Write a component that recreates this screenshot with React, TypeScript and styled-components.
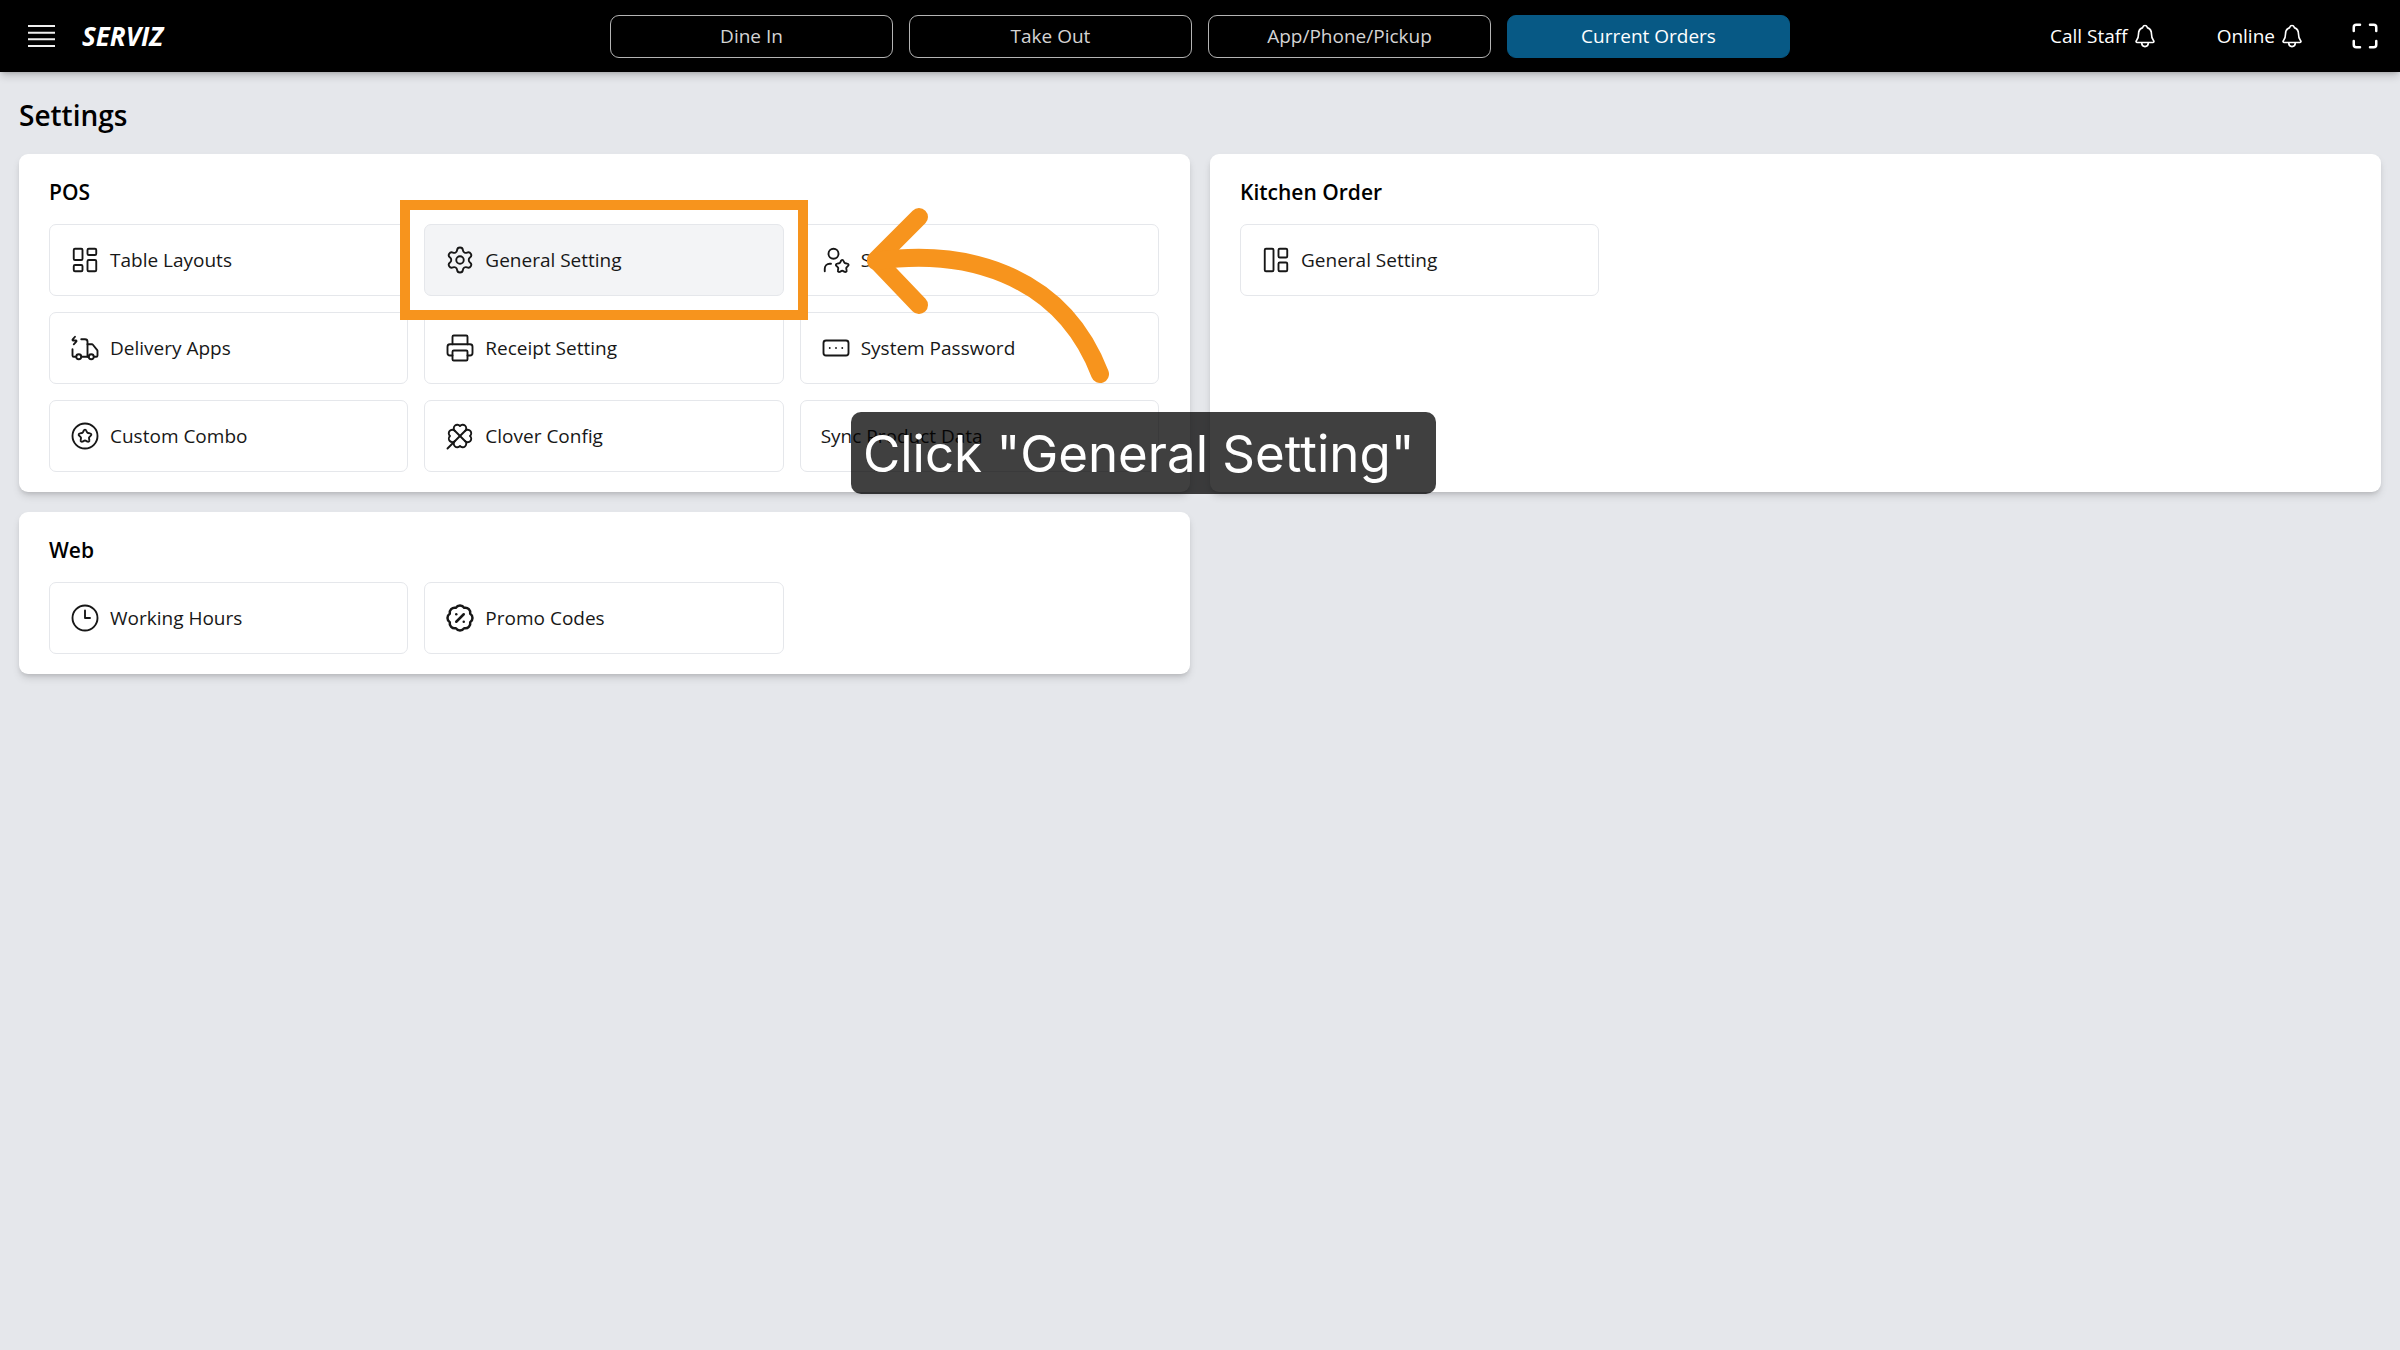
import React from "react";
import styled, { createGlobalStyle } from "styled-components";
import {
  BadgePercent,
  CircleStar,
  Clock3,
  Clover,
  LayoutDashboard,
  LayoutPanelLeft,
  Maximize,
  Printer,
  RectangleEllipsis,
  Settings,
  TruckElectric,
  UserStar,
} from "lucide-react";
import type { LucideIcon } from "lucide-react";
import { IoNotificationsOutline } from "react-icons/io5";

const GlobalStyle = createGlobalStyle`
  *, *::before, *::after { box-sizing: border-box; }
  body {
    margin: 0;
    min-height: 100vh;
    background: #e5e7eb;
    color: #000;
    font-family: "Open Sans", "Noto Sans", sans-serif;
  }
  button { font: inherit; color: inherit; cursor: pointer; }
  h1, h2 { margin: 0; }
`;

const Header = styled.header`
  display: grid;
  grid-template-columns: 1fr minmax(0, 1180px) 1fr;
  align-items: center;
  height: 72px;
  background: #000;
  color: #fff;
  box-shadow: 0 5px 8px -1px rgba(0, 0, 0, 0.18), 0 2px 4px -2px rgba(0, 0, 0, 0.2);
`;

const HeaderStart = styled.div`
  display: flex;
  align-items: center;
  gap: 27px;
  padding-left: 28px;
`;

const HeaderEnd = styled.div`
  display: flex;
  align-items: center;
  justify-content: flex-end;
  padding-right: 20px;
`;

const IconButton = styled.button`
  display: flex;
  padding: 0;
  border: 0;
  background: none;
`;

const Brand = styled.a`
  color: #fff;
  font-size: 26px;
  line-height: 36px;
  font-weight: 700;
  font-style: italic;
  text-decoration: none;
`;

const Nav = styled.nav`
  display: grid;
  grid-template-columns: repeat(4, 1fr);
  gap: 16px;
`;

const NavButton = styled.button<{ $active?: boolean }>`
  height: 43px;
  padding: 0;
  border: 1px solid ${(p) => (p.$active ? "#075985" : "#b4b4b4")};
  border-radius: 9px;
  background: ${(p) => (p.$active ? "#075985" : "#000")};
  color: ${(p) => (p.$active ? "#fff" : "#d4d4d4")};
  font-size: 19px;
  line-height: 28px;
`;

const AlertButton = styled(IconButton)`
  align-items: center;
  gap: 4px;
  margin-right: 59px;
  font-size: 19px;
  line-height: 28px;
`;

const FullscreenButton = styled(IconButton)`
  margin-left: -14px;
`;

const Main = styled.main`
  padding: 23px 19px;
`;

const PageTitle = styled.h1`
  font-size: 28px;
  line-height: 40px;
  font-weight: 600;
`;

const Panels = styled.div`
  display: grid;
  grid-template-columns: repeat(2, minmax(0, 1fr));
  gap: 20px;
  margin-top: 19px;
`;

const Panel = styled.section`
  position: relative;
  padding: 20px 31px 20px 30px;
  border-radius: 9px;
  background: #fff;
  box-shadow: 0 5px 8px -1px rgba(0, 0, 0, 0.12), 0 3px 5px -2px rgba(0, 0, 0, 0.14);
`;

const PanelTitle = styled.h2`
  font-size: 21px;
  line-height: 36px;
  font-weight: 600;
`;

const Tiles = styled.div`
  display: grid;
  grid-template-columns: repeat(3, minmax(0, 1fr));
  gap: 16px;
  margin-top: 14px;
`;

const TileFrame = styled.div`
  position: relative;
`;

const TileButton = styled.button<{ $hovered?: boolean }>`
  display: flex;
  align-items: center;
  gap: 10px;
  width: 100%;
  height: 72px;
  padding: 0 20px;
  border: 1px solid #e5e7eb;
  border-radius: 7px;
  background: ${(p) => (p.$hovered ? "#f3f4f6" : "#fff")};
  color: #171717;
  font-size: 19px;
  line-height: 28px;
  text-align: left;
`;

const Highlight = styled.div`
  position: absolute;
  z-index: 1;
  inset: -24px;
  border: 10px solid #f7941d;
  pointer-events: none;
`;

const Arrow = styled.svg`
  position: absolute;
  z-index: 2;
  left: 840px;
  top: 46px;
  pointer-events: none;
`;

const Callout = styled.div`
  position: absolute;
  z-index: 3;
  left: 832px;
  top: 258px;
  padding: 8px 22px 6px 12px;
  border-radius: 10px;
  background: rgba(0, 0, 0, 0.75);
  color: #fff;
  font-family: Inter, sans-serif;
  font-size: 51px;
  line-height: 68px;
  white-space: nowrap;
`;

type TileData = { label: string; icon?: LucideIcon; bold?: boolean; highlighted?: boolean };

const POS_TILES: TileData[] = [
  { label: "Table Layouts", icon: LayoutDashboard },
  { label: "General Setting", icon: Settings, highlighted: true },
  { label: "Staff", icon: UserStar },
  { label: "Delivery Apps", icon: TruckElectric },
  { label: "Receipt Setting", icon: Printer },
  { label: "System Password", icon: RectangleEllipsis },
  { label: "Custom Combo", icon: CircleStar },
  { label: "Clover Config", icon: Clover },
  { label: "Sync Product Data" },
];

const KITCHEN_TILES: TileData[] = [{ label: "General Setting", icon: LayoutPanelLeft }];

const WEB_TILES: TileData[] = [
  { label: "Working Hours", icon: Clock3 },
  { label: "Promo Codes", icon: BadgePercent, bold: true },
];

const NAV_ITEMS = ["Dine In", "Take Out", "App/Phone/Pickup", "Current Orders"];

function MenuIcon() {
  return (
    <svg width="27" height="24" viewBox="0 0 27 24" stroke="#efefef" strokeWidth="2" aria-hidden="true">
      <path d="M0 2h27M0 8.7h27M0 15.3h27M0 22h27" />
    </svg>
  );
}

function TileGroup({ title, tiles, children }: { title: string; tiles: TileData[]; children?: React.ReactNode }) {
  return (
    <Panel>
      <PanelTitle>{title}</PanelTitle>
      <Tiles>
        {tiles.map(({ label, icon: Icon, bold, highlighted }) => (
          <TileFrame key={label}>
            <TileButton type="button" $hovered={highlighted}>
              {Icon && <Icon size={30} strokeWidth={bold ? 2 : 1.5} aria-hidden="true" />}
              {label}
            </TileButton>
            {highlighted && <Highlight />}
          </TileFrame>
        ))}
      </Tiles>
      {children}
    </Panel>
  );
}

export default function App() {
  return (
    <>
      <GlobalStyle />
      <Header>
        <HeaderStart>
          <IconButton type="button" aria-label="Menu">
            <MenuIcon />
          </IconButton>
          <Brand href="#">SERVIZ</Brand>
        </HeaderStart>
        <Nav>
          {NAV_ITEMS.map((item) => (
            <NavButton key={item} type="button" $active={item === "Current Orders"}>
              {item}
            </NavButton>
          ))}
        </Nav>
        <HeaderEnd>
          <AlertButton type="button">
            Call Staff
            <IoNotificationsOutline size={26} />
          </AlertButton>
          <AlertButton type="button">
            Online
            <IoNotificationsOutline size={26} />
          </AlertButton>
          <FullscreenButton type="button" aria-label="Full screen">
            <Maximize size={30} strokeWidth={2} />
          </FullscreenButton>
        </HeaderEnd>
      </Header>
      <Main>
        <PageTitle>Settings</PageTitle>
        <Panels>
          <TileGroup title="POS" tiles={POS_TILES}>
            <Arrow
              width="260"
              height="190"
              viewBox="859 200 260 190"
              fill="none"
              stroke="#f7941d"
              strokeWidth="18"
              strokeLinecap="round"
              strokeLinejoin="round"
              aria-hidden="true"
            >
              <path d="M919 217L876 260L919 305" />
              <path d="M876 261C960 249 1060 270 1100 374" />
            </Arrow>
            <Callout>Click "General Setting"</Callout>
          </TileGroup>
          <TileGroup title="Kitchen Order" tiles={KITCHEN_TILES} />
          <TileGroup title="Web" tiles={WEB_TILES} />
        </Panels>
      </Main>
    </>
  );
}
